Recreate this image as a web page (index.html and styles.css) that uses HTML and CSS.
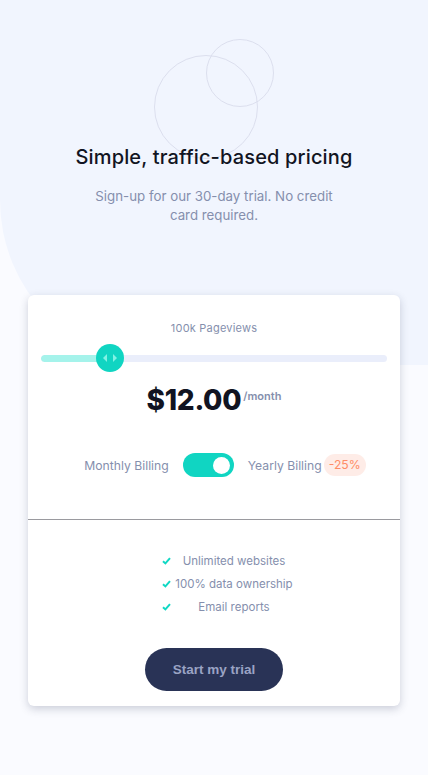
FILE: index.html
```html
<!DOCTYPE html>
<html lang="en">
<head>
<meta charset="utf-8">
<title>Pricing</title>
<link rel="stylesheet" href="styles.css">
</head>
<body>
<div class="bg-shape"></div>
<header class="hero">
  <svg class="circles" width="140" height="130" viewBox="0 0 140 130" aria-hidden="true">
    <circle cx="52" cy="68" r="51.5" fill="none" stroke="#dcdfee" stroke-width="1"/>
    <circle cx="86" cy="34" r="33.5" fill="none" stroke="#dcdfee" stroke-width="1"/>
  </svg>
  <h1 class="title">Simple, traffic-based pricing</h1>
  <p class="subtitle">Sign-up for our 30-day trial. No credit card required.</p>
</header>

<main class="card">
  <section class="card-top">
    <p class="views">100k Pageviews</p>
    <div class="slider">
      <div class="track"><div class="fill" style="width:20%"></div></div>
      <div class="thumb" style="left:20%">
        <svg width="14" height="8" viewBox="0 0 14 8" aria-hidden="true">
          <path d="M4 0 L0 4 L4 8 Z" fill="#80f2e4"/>
          <path d="M10 0 L14 4 L10 8 Z" fill="#80f2e4"/>
        </svg>
      </div>
    </div>
    <div class="price"><span class="amount">$12.00</span><span class="per">/month</span></div>
    <div class="billing">
      <span class="label">Monthly Billing</span>
      <span class="toggle"><span class="knob"></span></span>
      <span class="label">Yearly Billing</span>
      <span class="badge">-25%</span>
    </div>
  </section>
  <hr class="divider">
  <section class="card-bottom">
    <ul class="features">
      <li><svg class="check" width="9" height="8" viewBox="0 0 9 8" aria-hidden="true"><path d="M1 4.2 L3.4 6.4 L8 1.2" fill="none" stroke="#10d8c4" stroke-width="2"/></svg><span>Unlimited websites</span></li>
      <li><svg class="check" width="9" height="8" viewBox="0 0 9 8" aria-hidden="true"><path d="M1 4.2 L3.4 6.4 L8 1.2" fill="none" stroke="#10d8c4" stroke-width="2"/></svg><span>100% data ownership</span></li>
      <li><svg class="check" width="9" height="8" viewBox="0 0 9 8" aria-hidden="true"><path d="M1 4.2 L3.4 6.4 L8 1.2" fill="none" stroke="#10d8c4" stroke-width="2"/></svg><span>Email reports</span></li>
    </ul>
    <button class="cta" type="button">Start my trial</button>
  </section>
</main>
</body>
</html>
```

FILE: styles.css
```css
* { box-sizing: border-box; }

html, body {
  margin: 0;
  padding: 0;
}

body {
  position: relative;
  min-height: 775px;
  background: #fafbff;
  font-family: Inter, "Open Sans", "Liberation Sans", sans-serif;
  color: #858fad;
  overflow: hidden;
}

.bg-shape {
  position: absolute;
  top: 0;
  left: 0;
  width: 100%;
  height: 365px;
  background: #f1f5fe;
  border-bottom-left-radius: 165px;
  z-index: 0;
}

.hero {
  position: relative;
  z-index: 1;
  padding-top: 143px;
  text-align: center;
}

.circles {
  position: absolute;
  top: 39px;
  left: 154px;
  z-index: -1;
}

.title {
  margin: 0;
  font-size: 20px;
  line-height: 28px;
  font-weight: 500;
  letter-spacing: 0.15px;
  color: #111422;
}

.subtitle {
  margin: 16px auto 0;
  width: 240px;
  font-size: 13.3px;
  line-height: 19px;
  color: #858fad;
}

.card {
  position: relative;
  z-index: 1;
  margin: 70px 28px 0;
  width: 372px;
  background: #ffffff;
  border-radius: 6px;
  box-shadow: 0 3px 9px rgba(40, 48, 80, 0.22);
}

.card-top {
  padding: 25px 13px 0;
  text-align: center;
}

.views {
  margin: 0;
  font-size: 11px;
  line-height: 16px;
  letter-spacing: 0.2px;
}

.slider {
  position: relative;
  height: 28px;
  margin-top: 8px;
}

.track {
  position: absolute;
  left: 0;
  right: 0;
  top: 11px;
  height: 7px;
  border-radius: 4px;
  background: #eaeefb;
  overflow: hidden;
}

.fill {
  height: 100%;
  background: #a5f3eb;
  border-radius: 4px;
}

.thumb {
  position: absolute;
  top: 0;
  width: 28px;
  height: 28px;
  margin-left: -14px;
  border-radius: 50%;
  background: #10d5c2;
  display: flex;
  align-items: center;
  justify-content: center;
}

.price {
  display: flex;
  justify-content: center;
  align-items: baseline;
  margin-top: 10px;
  color: #111422;
}

.amount {
  font-size: 28px;
  line-height: 36px;
  font-weight: 800;
  letter-spacing: -0.3px;
}

.per {
  position: relative;
  top: -10px;
  margin-left: 2px;
  font-size: 11px;
  font-weight: 600;
  color: #858fad;
}

.billing {
  display: flex;
  align-items: center;
  justify-content: center;
  height: 26px;
  margin-top: 34px;
  padding-left: 22px;
  padding-bottom: 41px;
  box-sizing: content-box;
  font-size: 12.2px;
}

.label {
  color: #858fad;
}

.toggle {
  display: flex;
  align-items: center;
  justify-content: flex-end;
  width: 51px;
  height: 24px;
  margin: 0 14px;
  padding: 0 4px;
  border-radius: 12px;
  background: #10d5c2;
}

.knob {
  width: 17px;
  height: 17px;
  border-radius: 50%;
  background: #ffffff;
}

.badge {
  margin-left: 2px;
  padding: 0 5px;
  height: 22px;
  line-height: 22px;
  border-radius: 11px;
  background: #feece7;
  color: #ff8c66;
  font-size: 12.2px;
}

.divider {
  margin: 0;
  border: 0;
  border-top: 1px solid #9a9a9f;
}

.card-bottom {
  padding: 33px 0 15px;
  display: flex;
  flex-direction: column;
  align-items: center;
}

.features {
  list-style: none;
  margin: 0;
  padding: 0 0 0 24px;
  display: grid;
  row-gap: 7px;
}

.features li {
  display: grid;
  grid-template-columns: 16px 120px;
  align-items: center;
  font-size: 11.5px;
  line-height: 16px;
}

.features li span {
  text-align: center;
}

.check {
  justify-self: center;
}

.cta {
  margin-top: 33px;
  width: 138px;
  height: 43px;
  border: 0;
  border-radius: 22px;
  background: #293356;
  color: #9aa3c4;
  font-family: "Liberation Sans", Arial, sans-serif;
  font-weight: 700;
  font-size: 13.5px;
}
```
